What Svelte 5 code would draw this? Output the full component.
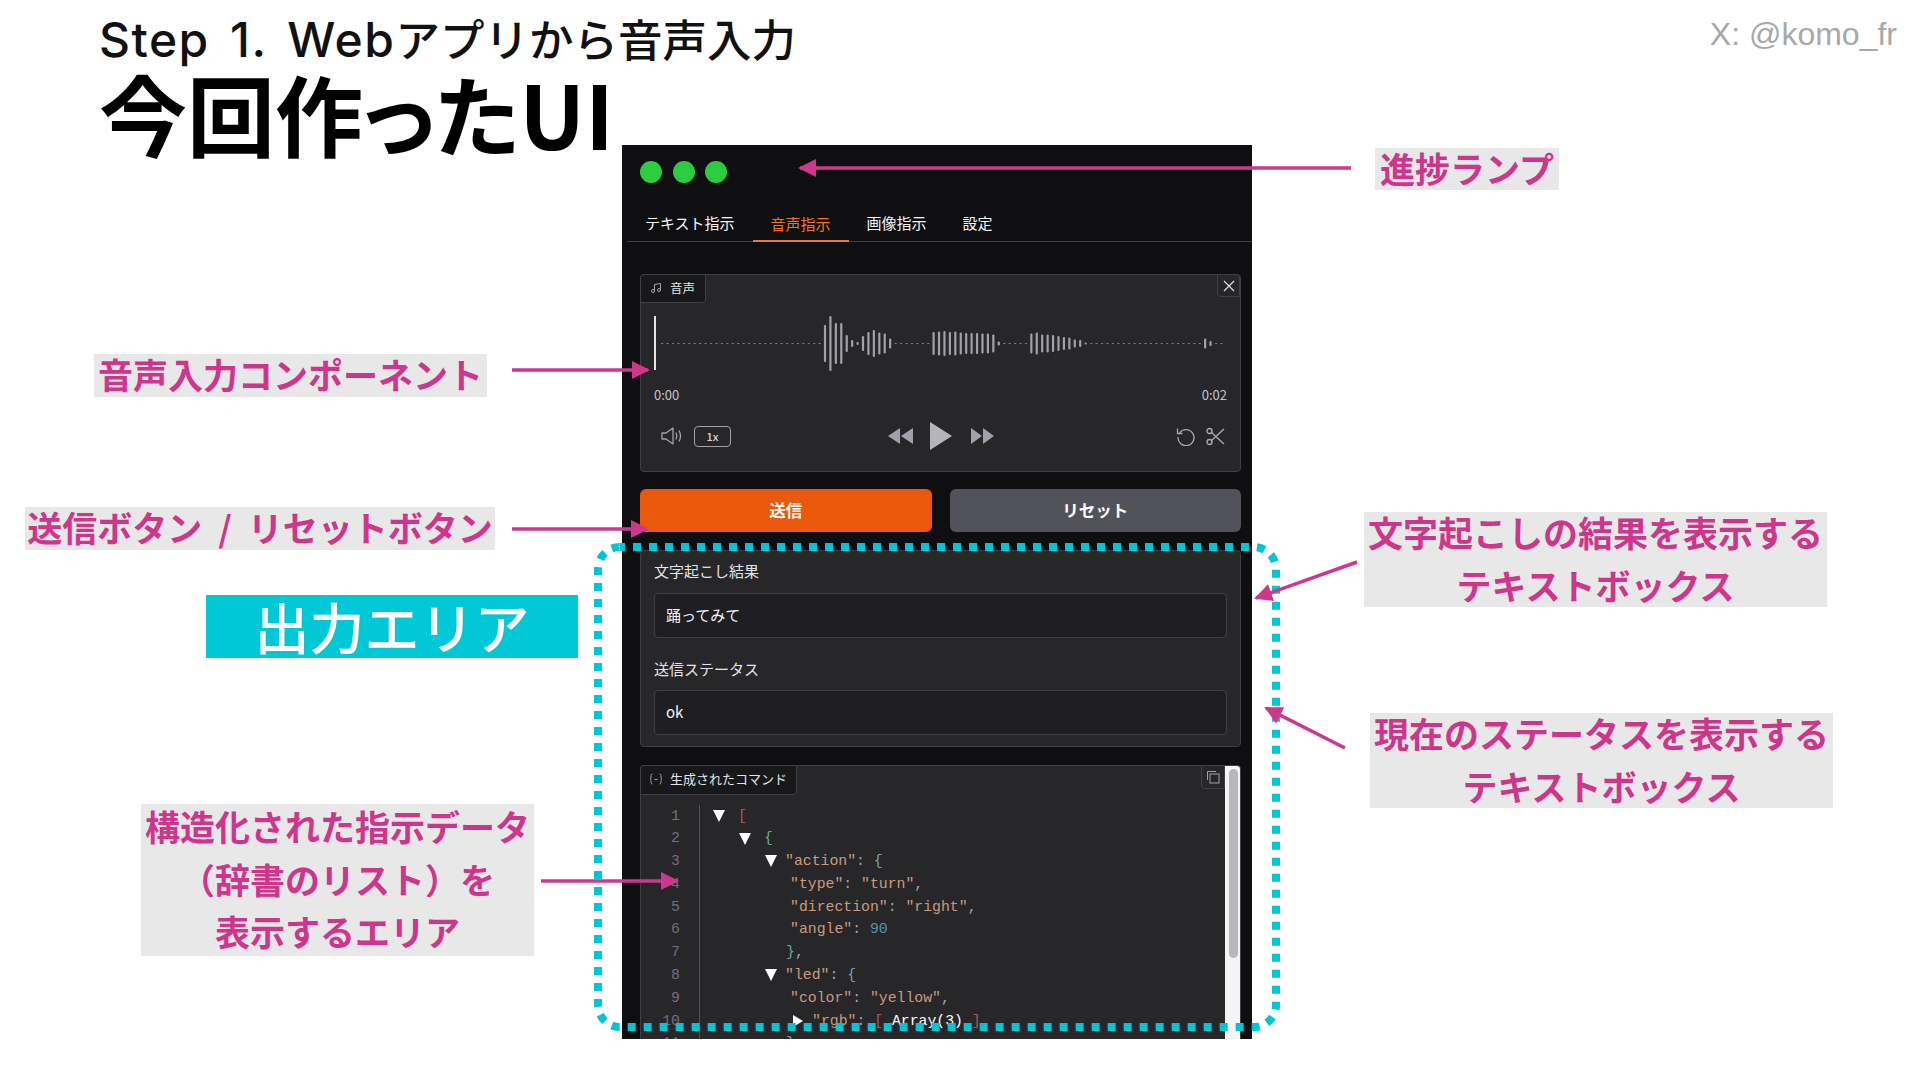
<script>
  const tabs = ['テキスト指示', '音声指示', '画像指示', '設定'];
  const peaks = { 30: [37,55,41,41,17,7,3,15,23,27,22,20,10], 50: [23,24,25,23,24,22,21,21,21,20,20,18,4], 68: [20,22,18,18,17,15,13,12,8,7,2], 100: [10,5] };
  const bars = Array.from({ length: 104 }, () => 1.2);
  for (const start in peaks) peaks[start].forEach((h, i) => (bars[+start + i] = h));

  const code = [
    { ind: 13, tri: 'down', gap: 13, t: [['bracket', '[']] },
    { ind: 39, tri: 'down', gap: 13, t: [['brace', '{']] },
    { ind: 65, tri: 'down', gap: 8, t: [['str', '"action"'], ['punc', ': '], ['brace', '{']] },
    { ind: 90, t: [['str', '"type"'], ['punc', ': '], ['str', '"turn"'], ['punc', ',']] },
    { ind: 90, t: [['str', '"direction"'], ['punc', ': '], ['str', '"right"'], ['punc', ',']] },
    { ind: 90, t: [['str', '"angle"'], ['punc', ': '], ['num', '90']] },
    { ind: 86, t: [['brace', '}'], ['punc', ',']] },
    { ind: 65, tri: 'down', gap: 8, t: [['str', '"led"'], ['punc', ': '], ['brace', '{']] },
    { ind: 90, t: [['str', '"color"'], ['punc', ': '], ['str', '"yellow"'], ['punc', ',']] },
    { ind: 93, tri: 'right', gap: 9, t: [['str', '"rgb"'], ['punc', ': '], ['bracket', '['], ['white', ' Array(3) '], ['bracket', ']']] },
    { ind: 86, t: [['brace', '}']] }
  ];
</script>

<div class="slide">
  <header class="head">
    <div>
      <div class="step"><span class="latin">Step 1. Web</span>アプリから音声入力</div>
      <h1>今回作ったUI</h1>
    </div>
    <div class="handle">X: @komo_fr</div>
  </header>

  <section class="window">
    <div class="lamps"><i></i><i></i><i></i></div>
    <nav class="tabs">
      {#each tabs as t, i}<span class="tab" class:active={i === 1}>{t}</span>{/each}
    </nav>

    <div class="block audio">
      <div class="blabel">
        <svg width="12" height="12" viewBox="0 0 24 24" fill="none" stroke="#a1a1aa" stroke-width="2"><path d="M9 18V5l12-2v13"/><circle cx="6" cy="18" r="3"/><circle cx="18" cy="16" r="3"/></svg>
        音声
      </div>
      <button class="close" aria-label="close">
        <svg width="14" height="14" viewBox="0 0 14 14" fill="none" stroke="#e4e4e7" stroke-width="1.1"><path d="M2 2l10 10M12 2L2 12"/></svg>
      </button>
      <svg class="wave" width="573" height="55" viewBox="0 0 573 55">
        <rect x="0" y="0" width="2" height="54" fill="#e4e4e7"/>
        {#each bars as h, i}
          <rect x={7 + i * 5.43} y={27.5 - h / 2} width={h < 2 ? 2.4 : 2.2} height={h} rx="1" fill={h < 2 ? '#85858c' : '#a1a1aa'}/>
        {/each}
      </svg>
      <div class="times"><span>0:00</span><span>0:02</span></div>
      <div class="controls">
        <div class="cleft">
          <svg width="23" height="20" viewBox="0 0 23 20" fill="none" stroke="#a1a1aa" stroke-width="1.3"><path d="M1 7h4l7-5v16l-7-5H1z" stroke-linejoin="round"/><path d="M15 6.500q1.600 3.500 0 7M18 4.500q3 5.500 0 11"/></svg>
          <span class="rate">1x</span>
        </div>
        <div class="ccenter">
          <svg width="25" height="16" viewBox="0 0 25 16" fill="#a1a1aa"><path d="M12 0v16L0 8zM25 0v16L13 8z"/></svg>
          <svg class="play" width="22" height="28" viewBox="0 0 22 28" fill="#b4b4bb"><path d="M0 0l22 14L0 28z"/></svg>
          <svg width="23" height="16" viewBox="0 0 23 16" fill="#a1a1aa"><path d="M0 0l11 8-11 8zM12 0l11 8-11 8z"/></svg>
        </div>
        <div class="cright">
          <svg width="20" height="19" viewBox="0 0 20 19" fill="none" stroke="#a8a8af" stroke-width="1.3"><path d="M3.500 6A8 8 0 1 1 2 10M1.500 1.500v5h5"/></svg>
          <svg width="19" height="19" viewBox="0 0 19 19" fill="none" stroke="#a8a8af" stroke-width="1.4"><circle cx="3.500" cy="4" r="2.500"/><circle cx="3.500" cy="15" r="2.500"/><path d="M5.500 5.500L18 17M5.500 13.500L18 2"/></svg>
        </div>
      </div>
    </div>

    <div class="buttons">
      <button class="primary">送信</button>
      <button class="secondary">リセット</button>
    </div>

    <div class="block fields">
      <div class="flabel">文字起こし結果</div>
      <div class="input">踊ってみて</div>
      <div class="flabel second">送信ステータス</div>
      <div class="input">ok</div>
    </div>

    <div class="block codeblock">
      <div class="blabel wide">
        <svg width="14" height="12" viewBox="0 0 14 12" fill="none" stroke="#a1a1aa" stroke-width="1"><path d="M3.500 1Q2 1 2 2.500V4.500Q2 6 1 6Q2 6 2 7.500V9.500Q2 11 3.500 11M10.500 1Q12 1 12 2.500V4.500Q12 6 13 6Q12 6 12 7.500V9.500Q12 11 10.500 11M5.500 6.500H8.500" /></svg>
        生成されたコマンド
      </div>
      <button class="copy" aria-label="copy">
        <svg width="14" height="14" viewBox="0 0 14 14" fill="none" stroke="#a1a1aa" stroke-width="1"><rect x="4" y="4" width="9" height="9"/><path d="M10 1.500H1.500V10"/></svg>
      </button>
      <div class="code">
        {#each code as line, i}
          <div class="line">
            <span class="no">{i + 1}</span>
            <span class="src" style="padding-left:{line.ind}px">
              {#if line.tri}<span class="tri {line.tri}" style="margin-right:{line.gap}px"></span>{/if}
              <span class="txt">{#each line.t as tok}<span class={tok[0]}>{tok[1]}</span>{/each}</span>
            </span>
          </div>
        {/each}
      </div>
      <div class="scroll"><div class="thumb"></div></div>
    </div>
  </section>

  <svg class="overlay" width="1920" height="1080" viewBox="0 0 1920 1080">
    <defs>
      <marker id="head" markerUnits="userSpaceOnUse" markerWidth="18" markerHeight="18" refX="16" refY="9" orient="auto">
        <path d="M0 0L18 9L0 18z" fill="#d0378c"/>
      </marker>
    </defs>
    <rect x="598" y="547" width="678" height="480" rx="22" fill="none" stroke="#00c5d5" stroke-width="8" stroke-dasharray="8 8" stroke-dashoffset="3"/>
    <g stroke="#d0378c" stroke-width="3.500" fill="none">
      <line x1="1351" y1="168" x2="800" y2="168" marker-end="url(#head)"/>
      <line x1="512" y1="370" x2="648" y2="370" marker-end="url(#head)"/>
      <line x1="512" y1="529" x2="647" y2="529" marker-end="url(#head)"/>
      <line x1="1357" y1="562" x2="1256" y2="598" marker-end="url(#head)"/>
      <line x1="1345" y1="748" x2="1266" y2="708" marker-end="url(#head)"/>
      <line x1="541" y1="881" x2="677" y2="881" marker-end="url(#head)"/>
    </g>
  </svg>

  <div class="note n1">進捗ランプ</div>
  <div class="note n2">音声入力コンポーネント</div>
  <div class="note n3">送信ボタン / リセットボタン</div>
  <div class="output">出力エリア</div>
  <div class="note n4"><span>文字起こしの結果を表示する</span><span>テキストボックス</span></div>
  <div class="note n5"><span>現在のステータスを表示する</span><span>テキストボックス</span></div>
  <div class="note n6"><span>構造化された指示データ</span><span>（辞書のリスト）を</span><span>表示するエリア</span></div>
</div>

<style>
  :global(body) { margin: 0; background: #fff; }
  .slide { position: relative; width: 1920px; height: 1080px; overflow: hidden; background: #fff; font-family: "Noto Sans CJK JP", sans-serif; }
  .head { display: flex; justify-content: space-between; align-items: flex-start; padding: 11px 23px 0 99px; }
  .step { font-size: 44.500px; line-height: 53px; font-weight: 500; color: #111; height: 53px; white-space: nowrap; }
  .latin { font-family: Inter, sans-serif; font-size: 48px; letter-spacing: 1.500px; word-spacing: 6px; }
  h1 { margin: 0; font-size: 88px; line-height: 96px; font-weight: 700; color: #000; font-feature-settings: "palt"; }
  .handle { font-family: "Liberation Sans", sans-serif; font-size: 32px; line-height: 40px; margin-top: 3px; color: #a8a8a8; }

  .window { position: absolute; left: 622px; top: 145px; width: 630px; height: 894px; box-sizing: border-box; overflow: hidden; background: #0f0f11; padding: 16px 11px 0 18px; color: #e4e4e7; }
  .lamps { display: flex; gap: 10.500px; }
  .lamps i { width: 22px; height: 22px; border-radius: 50%; background: #2ecc40; }
  .tabs { display: flex; margin: 0 -11px 0 -13px; height: 59px; align-items: flex-end; border-bottom: 1px solid #3f3f46; box-sizing: border-box; }
  .tab { padding: 0 18px; height: 36px; line-height: 35px; font-size: 15px; color: #f4f4f5; box-sizing: border-box; }
  .tab.active { color: #f97316; border-bottom: 2px solid #ea7a2c; margin-bottom: -1px; }

  .block { position: relative; width: 601px; box-sizing: border-box; background: #27272a; border: 1px solid #3f3f46; border-radius: 4px; }
  .audio { margin-top: 32px; height: 198px; padding: 41px 13px 0; }
  .blabel { position: absolute; left: -1px; top: -1px; height: 29px; width: 66px; box-sizing: border-box; display: flex; align-items: center; gap: 8px; padding: 0 0 2px 9px; font-size: 12.500px; color: #e4e4e7; background: #18181b; border: 1px solid #3f3f46; border-radius: 4px 0 4px 0; }
  .blabel.wide { width: 157px; height: 30px; gap: 7px; font-size: 13px; padding: 0 0 3px 8px; }
  .close { position: absolute; right: 0; top: -1px; width: 23px; height: 23px; padding: 0; display: flex; align-items: center; justify-content: center; background: #27272a; border: 1px solid #3f3f46; border-radius: 0 4px 0 4px; }
  .wave { display: block; }
  .times { display: flex; justify-content: space-between; margin-top: 14px; height: 20px; line-height: 20px; font-size: 13px; color: #c4c4c9; }
  .controls { display: grid; grid-template-columns: 1fr auto 1fr; align-items: center; height: 28px; margin-top: 17px; padding: 0 2px; }
  .cleft { display: flex; align-items: center; gap: 10px; padding-left: 5px; }
  .rate { width: 37px; height: 21px; box-sizing: border-box; border: 1px solid #a1a1aa; border-radius: 4px; text-align: center; font-size: 11px; line-height: 19px; font-weight: 500; color: #d4d4d8; }
  .ccenter { display: flex; align-items: center; gap: 17px; }
  .play { margin-right: 2px; }
  .cright { display: flex; align-items: center; justify-content: flex-end; gap: 10px; }

  .buttons { display: flex; gap: 18px; width: 601px; margin-top: 17px; }
  .buttons button { flex: 1; height: 43px; border: 0; border-radius: 6px; font-family: inherit; font-size: 16.500px; font-weight: 700; color: #fff; padding: 0 0 2px; }
  .primary { background: #ea580c; }
  .secondary { background: #52525b; }

  .fields { margin-top: 18px; height: 197px; padding: 10px 13px 0; }
  .flabel { font-size: 15px; line-height: 20px; color: #e4e4e7; margin-bottom: 12px; }
  .flabel.second { margin-top: 21px; margin-bottom: 11px; }
  .input { height: 45px; box-sizing: border-box; padding-left: 11px; line-height: 41px; font-size: 15px; color: #f4f4f5; background: #1f1f23; border: 1px solid #3f3f46; border-radius: 4px; }

  .codeblock { margin-top: 18px; height: 400px; padding-top: 38.500px; overflow: hidden; border-bottom: 0; }
  .copy { position: absolute; right: 15px; top: -1px; width: 24px; height: 24px; padding: 0; display: flex; align-items: center; justify-content: center; background: #27272a; border: 1px solid #3f3f46; border-radius: 0 0 0 4px; }
  .code { font-family: "Liberation Mono", monospace; font-size: 14.800px; line-height: 22.800px; }
  .line { display: flex; height: 22.800px; }
  .no { width: 39px; text-align: right; color: #71717a; flex: none; }
  .src { display: flex; align-items: center; margin-left: 19px; border-left: 1px solid #52525b; white-space: pre; flex: 1; }
  .tri { flex: none; width: 0; height: 0; }
  .tri.down { border-left: 6.500px solid transparent; border-right: 6.500px solid transparent; border-top: 12px solid #fff; }
  .tri.right { border-top: 6.500px solid transparent; border-bottom: 6.500px solid transparent; border-left: 10px solid #fff; }
  .str { color: #cc9a7c; }
  .punc { color: #a1a1aa; }
  .brace { color: #6fa8a0; }
  .bracket { color: #a85a5a; }
  .num { color: #5f90a8; }
  .white { color: #fff; }
  .scroll { position: absolute; right: -1px; top: -1px; bottom: 0; width: 16px; background: #f4f4f5; }
  .thumb { width: 9px; height: 189px; margin: 4px 0 0 4px; background: #b8b8b8; border-radius: 5px; }

  .overlay { position: absolute; left: 0; top: 0; pointer-events: none; }
  .note { position: absolute; box-sizing: border-box; background: #e8e8e8; color: #d0358c; font-size: 35px; font-weight: 700; display: flex; flex-direction: column; align-items: center; justify-content: center; white-space: nowrap; line-height: 52.500px; padding-bottom: 2px; word-spacing: 8px; }
  .n1 { left: 1375px; top: 148px; width: 184px; height: 42px; }
  .n2 { left: 94px; top: 354px; width: 393px; height: 43px; }
  .n3 { left: 25px; top: 507px; width: 470px; height: 43px; }
  .n4 { left: 1364px; top: 512px; width: 463px; height: 95px; }
  .n5 { left: 1370px; top: 713px; width: 463px; height: 95px; }
  .n6 { left: 141px; top: 804px; width: 393px; height: 152px; }
  .output { position: absolute; left: 206px; top: 595px; width: 372px; height: 63px; background: #00c8d7; color: #fff; font-size: 55px; font-weight: 500; line-height: 60px; text-align: center; }
</style>
